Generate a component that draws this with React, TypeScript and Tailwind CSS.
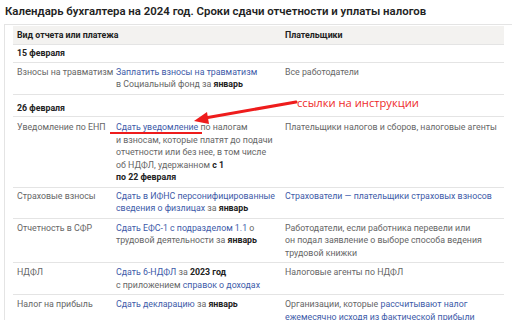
import React from 'react';

const link = 'text-[#3d5aa8]';
const b = 'font-bold text-[#222]';

function Row({ left, mid, right, className = '' }: { left?: React.ReactNode; mid?: React.ReactNode; right?: React.ReactNode; className?: string }) {
  return (
    <div className={`grid grid-cols-[99px_169px_223px] border-b border-[#e4e4e4] ${className}`}>
      <div className="pl-[4px] whitespace-nowrap">{left}</div>
      <div className="pl-[4px] whitespace-nowrap">{mid}</div>
      <div className="pl-[4px] whitespace-nowrap">{right}</div>
    </div>
  );
}

function DateRow({ label, className }: { label: string; className: string }) {
  return (
    <div className={`border-b border-[#e4e4e4] pl-[4px] font-bold text-[#222] ${className}`}>{label}</div>
  );
}

export default function App() {
  return (
    <div className="relative w-[512px] h-[320px] overflow-hidden bg-white font-['Roboto',sans-serif] text-[#666]">
      <h1 className="pl-[5px] pt-[3px] text-[11.4px] leading-[16px] font-semibold text-[#222]">
        Календарь бухгалтера на 2024 год. Сроки сдачи отчетности и уплаты налогов
      </h1>

      <div className="mt-[5px] ml-[4px] w-[540px] border-l border-t border-[#e4e4e4] pl-[8px] pt-[1px] text-[8.8px] leading-[12.5px]">
        <div className="w-[491px]">
          <Row
            className="h-[19px] items-center bg-[#f3f2f0] font-bold text-[#222]"
            left="Вид отчета или платежа"
            right="Плательщики"
          />
          <DateRow label="15 февраля" className="pt-[2px] pb-[2px]" />
          <Row
            className="pt-[3px] pb-[3px]"
            left="Взносы на травматизм"
            mid={<>
              <span className={link}>Заплатить взносы на травматизм</span><br />
              в Социальный фонд за <span className={b}>январь</span>
            </>}
            right="Все работодатели"
          />
          <DateRow label="26 февраля" className="pt-[7px] pb-[2px]" />
          <Row
            className="pt-[4px] pb-[3px]"
            left="Уведомление по ЕНП"
            mid={<>
              <span className={link}>Сдать уведомление</span> по налогам<br />
              и взносам, которые платят до подачи<br />
              отчетности или без нее, в том числе<br />
              об НДФЛ, удержанном <span className={b}>с 1</span><br />
              <span className={b}>по 22 февраля</span>
            </>}
            right="Плательщики налогов и сборов, налоговые агенты"
          />
          <Row
            className="pt-[2px] pb-[3px]"
            left="Страховые взносы"
            mid={<>
              <span className={link}>Сдать в ИФНС персонифицированные<br />сведения о физлицах</span> за <span className={b}>январь</span>
            </>}
            right={<span className={link}>Страхователи — плательщики страховых взносов</span>}
          />
          <Row
            className="pt-[3px] pb-[3px]"
            left="Отчетность в СФР"
            mid={<>
              <span className={link}>Сдать ЕФС-1 с подразделом 1.1</span> о<br />
              трудовой деятельности за <span className={b}>январь</span>
            </>}
            right={<>
              Работодатели, если работника перевели или<br />
              он подал заявление о выборе способа ведения<br />
              трудовой книжки
            </>}
          />
          <Row
            className="pt-[3px] pb-[3px]"
            left="НДФЛ"
            mid={<>
              <span className={link}>Сдать 6-НДФЛ</span> за <span className={b}>2023 год</span><br />
              с приложением <span className={link}>справок о доходах</span>
            </>}
            right="Налоговые агенты по НДФЛ"
          />
          <Row
            className="pt-[3px] pb-[3px]"
            left="Налог на прибыль"
            mid={<>
              <span className={link}>Сдать декларацию</span> за <span className={b}>январь</span>
            </>}
            right={<>
              Организации, которые <span className={link}>рассчитывают налог<br />ежемесячно исходя из фактической прибыли</span>
            </>}
          />
        </div>
      </div>

      {/* annotation overlay */}
      <span className="absolute left-[297px] top-[95px] text-[11.2px] leading-[16px] text-[#ee2a2a] font-['Open_Sans',sans-serif]">
        ссылки на инструкции
      </span>
      <svg className="absolute left-0 top-0" width="512" height="320" viewBox="0 0 512 320">
        <line x1="296" y1="102" x2="205" y2="118" stroke="#ee1c1c" strokeWidth="3" strokeLinecap="round" />
        <polygon points="194,121 207,112 209,124" fill="#ee1c1c" />
        <line x1="110" y1="133" x2="202" y2="133" stroke="#ee1c1c" strokeWidth="2" />
      </svg>
    </div>
  );
}
